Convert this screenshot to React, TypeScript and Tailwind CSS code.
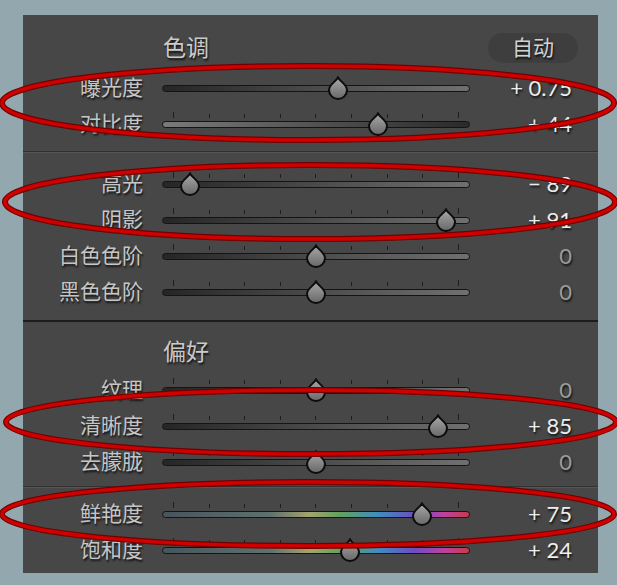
type Row = {
  label: string
  value: string
  pos: number
  dim?: boolean
  track: string
  ticks?: boolean
}

const grey = "bg-[linear-gradient(to_right,#262626,#707070)]"
const greyRev = "bg-[linear-gradient(to_right,#7a7a7a,#2a2a2a)]"
const color =
  "bg-[linear-gradient(to_right,#46555a,#5f7070_35%,#a4a46e_48%,#62a060_58%,#3e8fbf_70%,#6a4ec2_82%,#c0409e_92%,#c83a4a)]"

const tone1: Row[] = [
  { label: "曝光度", value: "+ 0.75", pos: 176, track: grey, ticks: false },
  { label: "对比度", value: "+ 44", pos: 216, track: greyRev },
]
const tone2: Row[] = [
  { label: "高光", value: "− 89", pos: 28, track: grey },
  { label: "阴影", value: "+ 91", pos: 284, track: grey },
  { label: "白色色阶", value: "0", pos: 154, dim: true, track: grey },
  { label: "黑色色阶", value: "0", pos: 154, dim: true, track: grey },
]
const pres1: Row[] = [
  { label: "纹理", value: "0", pos: 154, dim: true, track: grey },
  { label: "清晰度", value: "+ 85", pos: 276, track: grey },
  { label: "去朦胧", value: "0", pos: 154, dim: true, track: grey },
]
const pres2: Row[] = [
  { label: "鲜艳度", value: "+ 75", pos: 260, track: color },
  { label: "饱和度", value: "+ 24", pos: 188, track: color },
]

const shadow = "[text-shadow:1px_2px_2px_rgba(0,0,0,0.75)]"

const Thumb = ({ x }: { x: number }) => (
  <svg
    width="22"
    height="24"
    viewBox="0 0 22 24"
    className="absolute top-[6px]"
    style={{ left: x - 11 }}
  >
    <defs>
      <linearGradient id="th" x1="0" y1="0" x2="0" y2="1">
        <stop offset="0" stopColor="#a8a8a8" />
        <stop offset="1" stopColor="#686868" />
      </linearGradient>
    </defs>
    <path
      d="M11 1.5 C13 5.5 20 8.5 20 14 A9 9 0 0 1 2 14 C2 8.5 9 5.5 11 1.5 Z"
      fill="url(#th)"
      stroke="#0c0c0c"
      strokeWidth="2"
    />
  </svg>
)

const Slider = ({ row }: { row: Row }) => (
  <div className="relative w-[308px] h-[36px] flex items-center">
    {row.ticks !== false &&
      Array(9)
        .fill(1)
        .map((_, i) => (
          <div
            key={i}
            className={
              i === 0 || i === 8
                ? "absolute w-px h-[6px] top-[6px] bg-[#1e1e1e]"
                : "absolute w-px h-[4px] top-[8px] bg-[#1e1e1e]"
            }
            style={{ left: 11 + i * 35.6 }}
          />
        ))}
    <div className={`w-full h-[7px] rounded-full border-[1.5px] border-[#141414] ${row.track}`} />
    <Thumb x={row.pos} />
  </div>
)

const SliderRow = ({ row }: { row: Row }) => (
  <div className="flex items-center h-[36px]">
    <p
      className={`w-[120px] pb-[4px] text-right text-[21px] leading-none text-[#c6c6c6] ${shadow}`}
      style={{ fontFamily: '"Noto Sans CJK SC", sans-serif' }}
    >
      {row.label}
    </p>
    <div className="ml-[19px]">
      <Slider row={row} />
    </div>
    <p
      className={`w-[102px] text-right text-[22px] leading-none font-['Lato',sans-serif] ${shadow} ${
        row.dim ? "text-[#9c9c9c]" : "text-[#ededed]"
      }`}
    >
      {row.value}
    </p>
  </div>
)

const Header = ({ title, auto }: { title: string; auto?: boolean }) => (
  <div className="flex items-center h-full pl-[140px] pr-[20px]">
    <p
      className={`pb-[3px] text-[23px] leading-none text-[#cacaca] ${shadow}`}
      style={{ fontFamily: '"Noto Sans CJK SC", sans-serif' }}
    >
      {title}
    </p>
    {auto && (
      <div className="ml-auto flex items-center justify-center w-[90px] h-[30px] rounded-full bg-[#3e3e3e]">
        <span
          className={`pb-[3px] text-[21px] leading-none text-[#d2d2d2] ${shadow}`}
          style={{ fontFamily: '"Noto Sans CJK SC", sans-serif' }}
        >
          自动
        </span>
      </div>
    )}
  </div>
)

const Ring = ({ cx, cy, rx, ry }: { cx: number; cy: number; rx: number; ry: number }) => (
  <>
    <ellipse cx={cx} cy={cy} rx={rx} ry={ry} fill="none" stroke="#720000" strokeWidth="6" />
    <ellipse cx={cx} cy={cy} rx={rx} ry={ry} fill="none" stroke="#cf0000" strokeWidth="3.5" />
  </>
)

export default function App() {
  return (
    <div className="relative w-[617px] h-[585px] bg-[#93a7af] pt-[15px] pl-[23px]">
      <div className="w-[575px] h-[558px] bg-[#474747] flex flex-col">
        <div className="h-[55px] pt-[10px]">
          <Header title="色调" auto />
        </div>
        {tone1.map((r) => (
          <SliderRow key={r.label} row={r} />
        ))}
        <div className="mt-[9px] h-[2px] border-t border-[#303030] border-b border-b-[#555]" />
        <div className="pt-[13px]">
          {tone2.map((r) => (
            <SliderRow key={r.label} row={r} />
          ))}
        </div>
        <div className="mt-[10px] h-[2px] bg-[#1c1c1c]" />
        <div className="h-[50px] pt-[10px]">
          <Header title="偏好" />
        </div>
        {pres1.map((r) => (
          <SliderRow key={r.label} row={r} />
        ))}
        <div className="mt-[6px] h-[2px] border-t border-[#333] border-b border-b-[#555]" />
        <div className="pt-[8px]">
          {pres2.map((r) => (
            <SliderRow key={r.label} row={r} />
          ))}
        </div>
      </div>
      <svg
        className="absolute left-0 top-0 pointer-events-none"
        width="617"
        height="585"
        viewBox="0 0 617 585"
      >
        <Ring cx={308} cy={103} rx={306} ry={37} />
        <Ring cx={310} cy={202} rx={305} ry={37} />
        <Ring cx={311} cy={422} rx={305} ry={32} />
        <Ring cx={308} cy={514} rx={306} ry={32} />
      </svg>
    </div>
  )
}
